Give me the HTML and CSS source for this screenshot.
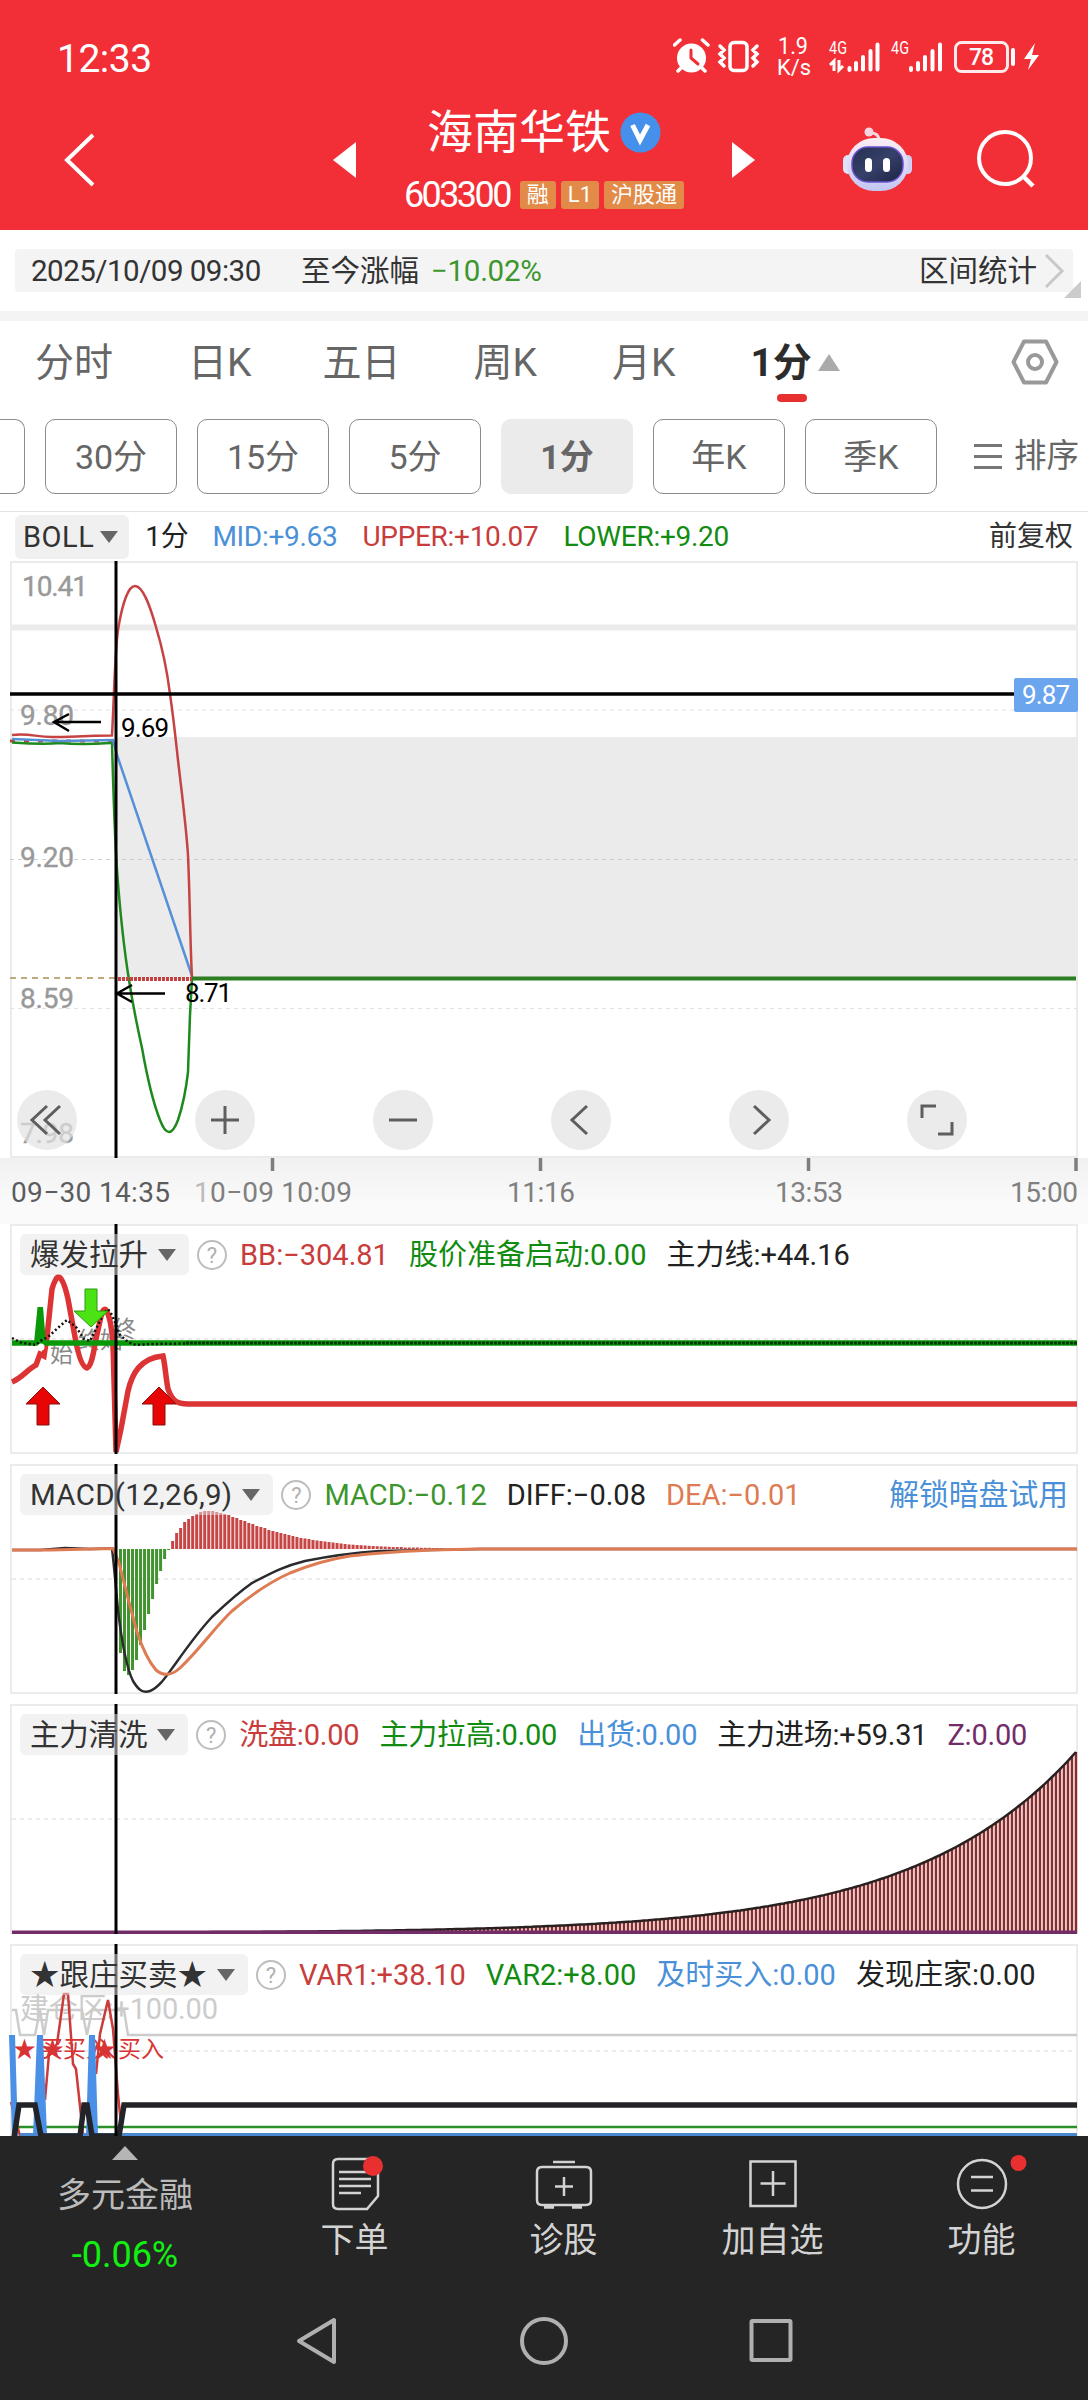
FILE: index.html
```html
<!DOCTYPE html>
<html lang="zh-CN">
<head>
    <meta charset="UTF-8">
    <meta name="viewport" content="width=device-width, initial-scale=1.0">
    <title>海南华铁 603300</title>
    <link rel="stylesheet" href="styles.css">
</head>
<body>

    <header class="header">
        <div class="status-bar">
            <span class="clock">12:33</span>
            <svg class="status-icons" width="368" height="54" viewBox="0 -6 368 54">
                <!-- alarma -->
                <circle cx="18.5" cy="22" r="14.5" fill="#fff"/>
                <path d="M1.500 9 L7 4 M29.500 4 L35 9 M5 35 L9 31 M32 35 L28 31" stroke="#fff" stroke-width="3.500" stroke-linecap="round"/>
                <path d="M18 14 V22 L25 28" stroke="#ee2f36" stroke-width="3" fill="none" stroke-linecap="round"/>
                <!-- vibración -->
                <rect x="57" y="6.500" width="17" height="28" rx="4" fill="none" stroke="#fff" stroke-width="3.500"/>
                <path d="M47 10 L51 14 L47 18 L51 22 L47 26 L51 30 M84 10 L80 14 L84 18 L80 22 L84 26 L80 30" fill="none" stroke="#fff" stroke-width="3.500" stroke-linecap="round"/>
                <text x="105" y="18" font-size="23" textLength="30" lengthAdjust="spacingAndGlyphs">1.9</text>
                <text x="104" y="39" font-size="22" textLength="34" lengthAdjust="spacingAndGlyphs">K/s</text>
                <!-- señal -->
                <text x="156" y="18" font-size="18" textLength="18" lengthAdjust="spacingAndGlyphs">4G</text>
                <path d="M157 29 L161 25 V35 M166 24 V34 L170 30" fill="none" stroke="#fff" stroke-width="3"/>
                <path d="M176.500 32 V34 M183 27 V33.500 M190 21 V33.500 M197.500 15 V33.500 M204.500 8.500 V33.500" stroke="#fff" stroke-width="4" stroke-linecap="round"/>
                <text x="218" y="18" font-size="18" textLength="18" lengthAdjust="spacingAndGlyphs">4G</text>
                <path d="M238 32 V34 M245 27 V33.500 M252 21 V33.500 M259.500 15 V33.500 M267 8.500 V33.500" stroke="#fff" stroke-width="4" stroke-linecap="round"/>
                <!-- batería -->
                <rect x="282.500" y="6.500" width="52" height="29" rx="6" fill="none" stroke="#fff" stroke-width="3" opacity=".9"/>
                <text x="296" y="29" font-size="23" font-weight="500" textLength="25">78</text>
                <path d="M340 14 V28" stroke="#fff" stroke-width="4" stroke-linecap="round"/>
                <path d="M362 7 L351 23 H358 L355 34 L366 19 H359 Z" fill="#fff"/>
            </svg>
        </div>
        <div class="title-bar">
            <svg class="back" width="32" height="56" viewBox="0 0 32 56"><path d="M29 3 L3 28 L29 53" fill="none" stroke="#fff" stroke-width="4"/></svg>
            <svg class="prev" width="23" height="36" viewBox="0 0 23 36"><path d="M23 0 V36 L0 18 Z" fill="#fff"/></svg>
            <div class="stock">
                <div class="stock-name">
                    <h1>海南华铁</h1>
                    <svg width="41" height="41" viewBox="0 0 41 41"><circle cx="20.500" cy="20.500" r="20" fill="#4590ea"/><path d="M12.500 13 L20 28 L28 13" fill="none" stroke="#fff" stroke-width="5"/></svg>
                </div>
                <div class="stock-code">
                    <span class="code">603300</span>
                    <span class="tag">融</span>
                    <span class="tag">L1</span>
                    <span class="tag">沪股通</span>
                </div>
            </div>
            <svg class="next" width="23" height="36" viewBox="0 0 23 36"><path d="M0 0 V36 L23 18 Z" fill="#fff"/></svg>
            <svg class="robot" width="70" height="66" viewBox="0 0 70 66">
                <defs>
                    <linearGradient id="head" x1="0" y1="0" x2="0" y2="1"><stop offset="0" stop-color="#fbeef4"/><stop offset="1" stop-color="#c3c6f3"/></linearGradient>
                    <linearGradient id="face" x1="0" y1="0" x2="1" y2="1"><stop offset="0" stop-color="#26304f"/><stop offset=".5" stop-color="#36406a"/><stop offset="1" stop-color="#1c2340"/></linearGradient>
                </defs>
                <path d="M26 6 Q36 5 36 14" fill="none" stroke="#f7d5e0" stroke-width="3"/>
                <circle cx="26" cy="5" r="4.500" fill="#f7d5e0"/>
                <rect x="0" y="28" width="10" height="19" rx="5" fill="#dfe2fa"/>
                <rect x="60" y="28" width="9" height="19" rx="4.500" fill="#d0d0f5"/>
                <rect x="4" y="11" width="61" height="53" rx="27" fill="url(#head)"/>
                <rect x="9" y="20" width="51" height="35" rx="16" fill="url(#face)" stroke="#6a50d0" stroke-width="1.500"/>
                <rect x="22" y="31" width="7" height="14" rx="3.500" fill="#fff"/>
                <rect x="40" y="31" width="7" height="14" rx="3.500" fill="#fff"/>
            </svg>
            <svg class="search" width="60" height="60" viewBox="0 0 60 60"><circle cx="28" cy="28" r="26" fill="none" stroke="#fff" stroke-width="4"/><path d="M46 46 L56 56" stroke="#fff" stroke-width="4.500"/></svg>
        </div>
    </header>

    <section class="range-row">
        <div class="range-box">
            <span class="range-date">2025/10/09 09:30</span>
            <span class="range-label">至今涨幅</span>
            <span class="range-value">−10.02%</span>
            <span class="range-link">区间统计</span>
            <svg width="22" height="36" viewBox="0 0 22 36"><path d="M2 2 L18 18 L2 34" fill="none" stroke="#c8c8c8" stroke-width="3"/></svg>
        </div>
        <i class="corner"></i>
    </section>

    <nav class="tabs">
        <span class="tab">分时</span>
        <span class="tab">日K</span>
        <span class="tab">五日</span>
        <span class="tab">周K</span>
        <span class="tab">月K</span>
        <span class="tab active">1分</span>
        <svg class="gear" width="48" height="46" viewBox="0 0 48 46"><path d="M13 2.500 H35 L45.500 23 L35 43.500 H13 L2.500 23 Z" fill="none" stroke="#999" stroke-width="4" stroke-linejoin="round"/><circle cx="24" cy="23" r="7" fill="none" stroke="#999" stroke-width="4"/></svg>
    </nav>

    <div class="periods">
        <span class="period cut"></span>
        <span class="period">30分</span>
        <span class="period">15分</span>
        <span class="period">5分</span>
        <span class="period on">1分</span>
        <span class="period">年K</span>
        <span class="period">季K</span>
        <span class="sort"><i></i>排序</span>
    </div>

    <div class="boll-row">
        <span class="chip">BOLL<b class="arrow"></b></span>
        <span class="boll-period">1分</span>
        <span class="blue">MID:+9.63</span>
        <span class="red">UPPER:+10.07</span>
        <span class="green">LOWER:+9.20</span>
        <span class="restore">前复权</span>
    </div>

    <section class="main-chart">
        <svg width="1088" height="597" viewBox="0 561 1088 597">
            <rect x="11" y="562" width="1066" height="595" fill="none" stroke="#ebebeb" stroke-width="2"/>
            <rect x="116" y="737" width="962" height="242" fill="#ebebeb"/>
            <path d="M12 627.500 H1078" stroke="#ebebeb" stroke-width="6"/>
            <path d="M10 710 H1077 M10 1008.500 H1077" stroke="#e2e2e2" stroke-dasharray="4 4"/>
            <path d="M10 859.500 H1077" stroke="#cfcfcf" stroke-dasharray="4 4"/>
            <path d="M10 978 H116" stroke="#bfa97d" stroke-width="2" stroke-dasharray="6 5"/>
            <g class="scale">
                <text x="22" y="596" textLength="66">10.41</text>
                <text x="20" y="725" textLength="54">9.80</text>
                <text x="20" y="867" textLength="54">9.20</text>
                <text x="20" y="1008" textLength="54">8.59</text>
                <text x="20" y="1143" textLength="54">7.98</text>
            </g>
            <path d="M10 741 H113" stroke="#c83c3c" stroke-width="3" stroke-dasharray="5 9"/>
            <path d="M12 742.500 C35 744 50 744 60 743 C80 745 95 744 112 743 C113 780 115 840 117 870 C121 925 125 955 129 980 C134 1012 138 1030 142 1048 C148 1082 154 1105 160 1120 C166 1136 172 1136 178 1120 C183 1105 186 1090 188 1072 L190 1015 L192 979" fill="none" stroke="#1e8a1e" stroke-width="2.500"/>
            <path d="M12 739 L60 741 L113 740 L117 755 L192 976" fill="none" stroke="#5590d8" stroke-width="2.500"/>
            <path d="M12 735 C30 733 35 737 52 737 C70 737 80 736 112 735.500 C114 700 115 650 118 630 C122 605 128 586 135 586 C143 586 150 606 156 627 C163 650 167 670 170 694 C174 722 176 742 178 760 C182 795 186 825 188 855 C190 900 190 940 192 978" fill="none" stroke="#c64343" stroke-width="2.500"/>
            <path d="M118 979 H192" stroke="#c64343" stroke-width="4" stroke-dasharray="3 1"/>
            <path d="M192 978.500 H1076" stroke="#2d7d23" stroke-width="4"/>
            <path d="M10 694 H1015" stroke="#000" stroke-width="3.500"/>
            <path d="M116 561 V1158" stroke="#000" stroke-width="3"/>
            <path d="M101 722 H54 M69 714 L54 722 L69 731 M165 993.500 H117 M132 985 L117 993.500 L132 1002" fill="none" stroke="#000" stroke-width="2.500"/>
            <g class="note">
                <text x="121" y="737" textLength="48">9.69</text>
                <text x="185" y="1002" textLength="47">8.71</text>
            </g>
            <rect x="1014" y="678" width="64" height="34" rx="2" fill="#6ba5ee"/>
            <text class="price-tag" x="1022" y="704" textLength="48">9.87</text>
        </svg>
        <div class="tools">
            <button><svg viewBox="0 0 60 60"><path d="M30 16 L15 30 L30 44 M43 16 L28 30 L43 44"/></svg></button>
            <button><svg viewBox="0 0 60 60"><path d="M16 30 H44 M30 16 V44"/></svg></button>
            <button><svg viewBox="0 0 60 60"><path d="M16 30 H44"/></svg></button>
            <button><svg viewBox="0 0 60 60"><path d="M36 16 L21 30 L36 44"/></svg></button>
            <button><svg viewBox="0 0 60 60"><path d="M25 16 L40 30 L25 44"/></svg></button>
            <button><svg viewBox="0 0 60 60"><path d="M15 28 V16 H29 M45 32 V44 H31"/></svg></button>
        </div>
    </section>

    <div class="time-axis">
        <svg width="1088" height="66" viewBox="0 0 1088 66">
            <path d="M272.500 0 V13 M540.500 0 V13 M808.500 0 V13 M1076 0 V13" stroke="#7d7d7d" stroke-width="3.500"/>
            <text class="first" x="11" y="44" textLength="159">09−30 14:35</text>
            <text x="194" y="44" textLength="158"><tspan fill="#bbb">1</tspan>0−09 10:09</text>
            <text x="507" y="44" textLength="68">11:16</text>
            <text x="775" y="44" textLength="68">13:53</text>
            <text x="1010" y="44" textLength="68">15:00</text>
        </svg>
    </div>

    <!-- 爆发拉升 -->
    <section class="panel">
        <svg width="1088" height="230" viewBox="0 0 1088 230">
            <rect class="frame" x="11" y="1" width="1066" height="228"/>
            <path class="grid" d="M12 115 H1077"/>
            <g class="mark">
                <text x="50" y="138">始</text>
                <text x="78" y="124">终</text>
                <text x="100" y="124">始</text>
                <text x="113" y="113">终</text>
            </g>
            <path d="M12 158 C22 154 28 145 36 141 L40 130 L44 132 L47 113 L52 65 C54 58 57 52 59 53 C63 55 66 66 68 75 L75 113 C78 130 82 143 87 144 C92 142 94 125 96 115 L100 97 C102 85 105 84 106 86 C110 92 112 107 113 120 L116 228 L121 205 L128 167 C132 150 140 134 163 132 C165 140 166 155 168 165 C172 176 176 180 188 180 H1077" fill="none" stroke="#dc3434" stroke-width="5.500"/>
            <path d="M34 119 L37.500 83 H43 L46 119 Z" fill="#089808"/>
            <path d="M12 119 H1077" stroke="#089808" stroke-width="5.500"/>
            <circle cx="41" cy="123" r="3.500" fill="#fff"/>
            <path d="M12 114 L22 119 L36 121 L40 117 L48 113 L60 102 L67 96 L76 103 L84 115 L90 117 L97 103 L104 89 L108 85 L112 91 L120 111 L128 118 L136 121 L150 120 L188 119.500" fill="none" stroke="#111" stroke-width="2.500" stroke-dasharray="2 2.500"/>
            <path d="M186 119 H1077" stroke="#06380a" stroke-width="3" stroke-dasharray="3 1"/>
            <path class="up" d="M43 163 L60 180 H49 V201 H37 V180 H26 Z M159 163 L176 180 H165 V201 H153 V180 H142 Z"/>
            <path class="down" d="M85 65 H97 V87 H108 L91 103 L74 87 H85 Z"/>
            <path class="cross" d="M116 0 V230"/>
        </svg>
        <div class="legend">
            <span class="chip">爆发拉升<b class="arrow"></b></span>
            <i class="help">?</i>
            <span class="red">BB:−304.81</span>
            <span class="green">股价准备启动:0.00</span>
            <span class="black">主力线:+44.16</span>
        </div>
    </section>

    <!-- MACD -->
    <section class="panel">
        <svg width="1088" height="230" viewBox="0 0 1088 230">
            <rect class="frame" x="11" y="1" width="1066" height="228"/>
            <path class="grid" d="M12 115 H1077"/>
            <g id="macd-bars"></g>
            <path d="M12 86 H40 L65 84 L90 85 L112 84.500 C114 100 115 115 118 146 C122 180 127 205 133 217 C139 227 143 229 150 227 C160 223 167 211 176 199 C188 182 200 166 212 153 C232 134 242 126 252 119 C275 107 285 102 305 97 C325 93 350 89 380 87 C420 86 450 85.500 480 85 H1077" fill="none" stroke="#2b2b2e" stroke-width="2.500"/>
            <path d="M12 86 H50 L113 84.500 L119 99 L130 142 L137 168 C143 186 149 198 156 206 C163 212 171 212 180 204 C200 185 215 163 232 147 C252 130 270 118 290 109 C310 101 330 95 350 92 C380 88.500 410 87 430 86 L480 85 H1077" fill="none" stroke="#de7b52" stroke-width="3"/>
            <path class="cross" d="M116 0 V230"/>
        </svg>
        <div class="legend">
            <span class="chip wide">MACD(12,26,9)<b class="arrow"></b></span>
            <i class="help">?</i>
            <span class="leaf">MACD:−0.12</span>
            <span class="black">DIFF:−0.08</span>
            <span class="orange">DEA:−0.01</span>
            <span class="unlock">解锁暗盘试用</span>
        </div>
    </section>

    <!-- 主力清洗 -->
    <section class="panel">
        <svg width="1088" height="230" viewBox="0 0 1088 230">
            <rect class="frame" x="11" y="1" width="1066" height="228"/>
            <path class="grid" d="M12 115 H1077"/>
            <g id="force-bars"></g>
            <path d="M12 228.500 H1077" stroke="#722d68" stroke-width="4"/>
            <path class="cross" d="M116 0 V230"/>
        </svg>
        <div class="legend tight">
            <span class="chip">主力清洗<b class="arrow"></b></span>
            <i class="help">?</i>
            <span class="red">洗盘:0.00</span>
            <span class="green">主力拉高:0.00</span>
            <span class="blue">出货:0.00</span>
            <span class="black">主力进场:+59.31</span>
            <span class="purple">Z:0.00</span>
        </div>
    </section>

    <!-- 跟庄买卖 -->
    <section class="panel last">
        <svg width="1088" height="192" viewBox="0 0 1088 192">
            <path class="frame" d="M11 192 V1 H1077 V192"/>
            <path class="grid" d="M12 107 H1077"/>
            <text class="zone" x="20" y="75" textLength="198">建仓区:+100.00</text>
            <path d="M12 66 H16 L20 91 H35 L40 66 L44 91 L48 66 H82 L87 91 L92 66 H124 L128 91 H1077" fill="none" stroke="#ccc" stroke-width="2.500"/>
            <path d="M12 183 H1077" stroke="#2a902a" stroke-width="2.500"/>
            <path d="M11 158 L20 192 M45 156 L49 110 L57 100 L64 50 L68 50 L73 120 L76 125 L83 190 M96 130 L100 90 L108 56 L113 85 L118 150 L121 180" fill="none" stroke="#cc3a3a" stroke-width="2.500"/>
            <g class="buy">
                <text x="13" y="113">★</text>
                <text x="41" y="113">★</text>
                <text x="93" y="113">★</text>
                <text x="40" y="113">买</text>
                <text x="63" y="113">买入</text>
                <text x="93" y="113">入</text>
                <text x="118" y="113">买入</text>
            </g>
            <path d="M9 91 H15 L18 192 H12 Z M37 91 H43 L47 192 H33 Z M89 91 H95 L98 192 H86 Z" fill="#4a90e6"/>
            <path d="M20 190.500 H1077" stroke="#4a88d0" stroke-width="3"/>
            <path d="M14 194 L19 161 H35 L41 192 H80 L84 161 H87 L92 192 H119 L124 161 H1077" fill="none" stroke="#222428" stroke-width="5.500"/>
            <path class="cross" d="M116 0 V192"/>
        </svg>
        <div class="legend">
            <span class="chip stars">★跟庄买卖★<b class="arrow"></b></span>
            <i class="help">?</i>
            <span class="red">VAR1:+38.10</span>
            <span class="green">VAR2:+8.00</span>
            <span class="blue">及时买入:0.00</span>
            <span class="black">发现庄家:0.00</span>
        </div>
    </section>

    <footer class="footer">
        <div class="actions">
            <div class="sector">
                <svg width="26" height="14" viewBox="0 0 26 14"><path d="M13 0 L26 14 H0 Z" fill="#b5b5b5"/></svg>
                <span class="sector-name">多元金融</span>
                <span class="sector-change">-0.06%</span>
            </div>
            <div class="action">
                <svg width="60" height="56" viewBox="0 0 60 56"><path d="M13 4 H49 Q53 4 53 8 V41 L42 54 H13 Q8 54 8 49 V9 Q8 4 13 4 Z M14 17 H44 M14 24 H46 M14 31 H46 M14 38 H36"/><circle class="dot" cx="48" cy="11" r="10"/></svg>
                <span>下单</span>
            </div>
            <div class="action">
                <svg width="60" height="56" viewBox="0 0 60 56"><path d="M19 7 H41 M8 12 H52 Q57 12 57 17 V45 Q57 50 52 50 H8 Q3 50 3 45 V17 Q3 12 8 12 Z M30 22 V41 M21 31.500 H39 M10 52.500 H20 M38 52.500 H48"/></svg>
                <span>诊股</span>
            </div>
            <div class="action">
                <svg width="60" height="56" viewBox="0 0 60 56"><path d="M7.500 6.500 H52.500 V51 H7.500 Z M30 16 V41 M17.500 28.500 H42.500"/></svg>
                <span>加自选</span>
            </div>
            <div class="action">
                <svg width="90" height="56" viewBox="-15 0 90 56"><circle cx="30" cy="29" r="24"/><path d="M19 22 H41 M19 35.500 H41"/><circle class="dot" cx="66.500" cy="8" r="8"/></svg>
                <span>功能</span>
            </div>
        </div>
        <div class="sys-nav">
            <svg width="44" height="48" viewBox="0 0 44 48"><path d="M39 3 V45 L4 24 Z"/></svg>
            <svg width="48" height="48" viewBox="0 0 48 48"><circle cx="24" cy="24" r="22"/></svg>
            <svg width="44" height="48" viewBox="0 0 44 48"><rect x="2.500" y="4" width="39" height="39" rx="1"/></svg>
        </div>
    </footer>

    <script>
        const ns = 'http://www.w3.org/2000/svg';

        function addBar(group, x, y, w, h, color) {
            const r = document.createElementNS(ns, 'rect');
            r.setAttribute('x', x);
            r.setAttribute('y', y);
            r.setAttribute('width', w);
            r.setAttribute('height', h);
            r.setAttribute('fill', color);
            group.appendChild(r);
        }

        // MACD: barras verdes hacia abajo y rojas hacia arriba
        const macd = [-104, -122, -126, -121, -111, -96, -81, -65, -50, -35, -22, -10, -1,
            8, 16, 21, 27, 30, 33, 35, 37, 38, 38, 38, 37, 36, 35, 34, 32, 31, 29, 28, 26, 25, 23, 22, 21, 19, 18, 17, 16, 15, 14,
            13, 12, 11, 10.5, 10, 9, 8.5, 8, 7.5, 7, 6.5, 6, 5.5, 5, 4.5, 4.3, 4, 3.8, 3.5, 3.2, 3, 2.8, 2.6, 2.4,
            2.2, 2, 2, 2, 1.5, 1.5, 1.5, 1.5, 1.2, 1.2, 1.2, 1, 1, 1];
        const macdGroup = document.getElementById('macd-bars');
        macd.forEach((v, i) => {
            const x = 119 + i * 4.01;
            addBar(macdGroup, x, v < 0 ? 85 : 85 - v, 3, Math.abs(v), v < 0 ? '#419430' : '#c64545');
        });

        // 主力进场: crecimiento exponencial
        const forceGroup = document.getElementById('force-bars');
        const curve = x => 229 - 181 * Math.exp(-0.0062 * (1076 - x));
        let line = '';
        for (let x = 1076; x > 116; x -= 4) {
            addBar(forceGroup, x - 2, curve(x), 4, 229 - curve(x), '#fbdcdc');
            addBar(forceGroup, x - 1.2, curve(x), 2.3, 229 - curve(x), '#812f2f');
            line += (line ? 'L' : 'M') + x + ' ' + curve(x).toFixed(1);
        }
        const path = document.createElementNS(ns, 'path');
        path.setAttribute('d', line);
        path.setAttribute('class', 'force-line');
        forceGroup.appendChild(path);
    </script>

</body>
</html>
```
FILE: styles.css
```css
/* Estilos generales */
* {
    box-sizing: border-box;
}

body {
    margin: 0;
    width: 1088px;
    height: 2400px;
    overflow: hidden;
    background-color: #fff;
    color: #333;
    font-family: Roboto, "Noto Sans CJK SC", sans-serif;
    font-size: 29px;
    white-space: nowrap;
}

svg {
    display: block;
    flex: none;
}

h1 {
    margin: 0;
}

/* Cabecera */
.header {
    height: 230px;
    background-color: #f22f37;
    color: #fff;
}

.status-bar {
    display: flex;
    justify-content: space-between;
    height: 108px;
    padding: 30px 47px 0 57px;
}

.clock {
    margin-top: 6px;
    font-size: 39px;
    line-height: 46px;
    letter-spacing: -0.5px;
}

.status-icons text {
    fill: #fff;
}

.title-bar {
    display: flex;
    align-items: center;
    height: 104px;
    padding-left: 64px;
}

.prev {
    margin-left: 237px;
}

.stock {
    width: 376px;
}

.stock-name {
    display: flex;
    justify-content: center;
    align-items: center;
    gap: 9px;
    height: 52px;
}

.stock-name h1 {
    font-size: 46px;
    font-weight: 400;
    line-height: 50px;
    height: 54px;
}

.stock-name svg {
    margin-top: -4px;
}

.stock-code {
    display: flex;
    justify-content: center;
    align-items: center;
    gap: 5px;
    height: 34px;
    margin-top: 18px;
}

.code {
    margin-right: 5px;
    font-size: 36px;
    letter-spacing: -2.6px;
}

.tag {
    height: 28px;
    padding: 0 7px;
    border-radius: 3px;
    background-color: #e28b48;
    font-size: 22px;
    line-height: 27px;
}

.robot {
    margin-left: 88px;
}

.search {
    margin-left: 64px;
}

/* Estadística del rango */
.range-row {
    position: relative;
    height: 91px;
    padding: 19px 15px 0;
    border-bottom: 10px solid #f4f4f4;
}

.range-box {
    display: flex;
    align-items: center;
    height: 43px;
    padding: 0 7px 0 16px;
    border-radius: 4px;
    background-color: #f4f4f4;
    font-size: 29.500px;
    line-height: 42px;
}

.range-date {
    width: 270px;
    letter-spacing: -0.5px;
}

.range-value {
    margin-left: 12px;
    letter-spacing: -0.3px;
    color: #3c962c;
}

.range-link {
    margin-left: auto;
    margin-right: 7px;
}

.corner {
    position: absolute;
    right: 7px;
    top: 51px;
    border-left: 17px solid transparent;
    border-bottom: 17px solid #ccc;
}

/* Pestañas */
.tabs {
    display: flex;
    align-items: flex-start;
    height: 98px;
    padding: 13px 29px 0 35px;
    color: #666;
    font-size: 39px;
    line-height: 58px;
}

.tab {
    margin-right: 75px;
}

.tab:nth-child(2) {
    margin-right: 71px;
}

.tab:nth-child(3) {
    margin-right: 73px;
}

.tab.active {
    position: relative;
    margin-right: 0;
    color: #2c2c2c;
    font-weight: 700;
}

.tab.active::before {
    content: "";
    position: absolute;
    left: 27px;
    top: 60px;
    width: 30px;
    height: 8px;
    border-radius: 4px;
    background-color: #e93030;
}

.tab.active::after {
    content: "";
    position: absolute;
    left: 68px;
    top: 20px;
    border: 11px solid transparent;
    border-top: 0;
    border-bottom: 17px solid #aaa;
}

.gear {
    margin: 5px 0 0 auto;
}

/* Periodos */
.periods {
    display: flex;
    gap: 20px;
    height: 93px;
    overflow: hidden;
    border-bottom: 1px solid #e4e4e4;
    color: #666;
}

.period {
    flex: none;
    width: 132px;
    height: 75px;
    border: 1px solid #8c8c8c;
    border-radius: 10px;
    font-size: 34px;
    line-height: 74px;
    text-align: center;
}

.period.cut {
    width: 25px;
    border-left: 0;
    border-radius: 0 10px 10px 0;
}

.period.on {
    border-color: #ebebeb;
    background-color: #ebebeb;
    font-weight: 700;
}

.sort {
    display: flex;
    align-items: center;
    gap: 12px;
    height: 75px;
    margin-left: 17px;
    font-size: 32.500px;
    line-height: 75px;
}

.sort i {
    width: 28px;
    height: 25px;
    border-top: 3px solid #777;
    border-bottom: 3px solid #777;
    background: linear-gradient(#777, #777) center / 100% 3px no-repeat;
}

/* Indicador principal */
.boll-row {
    display: flex;
    align-items: center;
    height: 49px;
    padding: 3px 15px 2px;
    font-size: 28px;
    line-height: 44px;
    letter-spacing: -0.3px;
}

.boll-period {
    margin: 0 24px 0 16px;
    color: #222;
}

.boll-row .blue,
.boll-row .red {
    margin-right: 25px;
}

.boll-row .chip {
    height: 44px;
    padding: 0 11px 0 8px;
    background-color: #f0f0f0;
    font-size: 29px;
    letter-spacing: 0.5px;
}

.boll-row .arrow {
    margin-left: 6px;
}

.restore {
    margin-left: auto;
    letter-spacing: 0;
}

.chip {
    display: flex;
    align-items: center;
    height: 41px;
    padding: 0 13px 0 10px;
    border-radius: 6px;
    background-color: rgba(230, 230, 230, 0.5);
    color: #333;
    font-size: 29.500px;
}

.chip.wide {
    letter-spacing: 0.3px;
}

.arrow {
    margin-left: 10px;
    border: 9px solid transparent;
    border-top: 12px solid #666;
    border-bottom: 0;
}

/* Gráfico principal */
.main-chart {
    position: relative;
    height: 597px;
}

.scale text {
    fill: #999;
    font-size: 28px;
    stroke: #999;
    stroke-width: 0.4px;
}

.note text {
    fill: #000;
    font-size: 26px;
}

.price-tag {
    fill: #fff;
    font-size: 26px;
}

.tools {
    position: absolute;
    left: 17px;
    bottom: 8px;
    display: flex;
    gap: 118px;
}

.tools button {
    width: 60px;
    height: 60px;
    padding: 0;
    border: none;
    border-radius: 50%;
    background-color: rgba(226, 226, 226, 0.7);
}

.tools path {
    fill: none;
    stroke: #5e5e5e;
    stroke-width: 3;
}

/* Eje de tiempo */
.time-axis {
    height: 66px;
    background: linear-gradient(#f1f1f1, #fafafa 70%);
}

.time-axis text {
    fill: #808080;
    font-size: 28px;
}

.time-axis .first {
    fill: #5c5c5c;
}

/* Paneles de indicadores */
.panel {
    position: relative;
    height: 230px;
    margin-bottom: 10px;
}

.panel.last {
    height: 192px;
    margin-bottom: 0;
}

.frame {
    fill: none;
    stroke: #ebebeb;
    stroke-width: 2;
}

.grid {
    stroke: #ebebeb;
    stroke-width: 2;
    stroke-dasharray: 4 4;
}

.cross {
    stroke: #000;
    stroke-width: 3;
}

.mark text {
    fill: #888;
    font-size: 23px;
}

.up {
    fill: #e80505;
    stroke: #8c0f0f;
    stroke-width: 1;
}

.down {
    fill: #4be314;
    stroke: #2b9a0c;
    stroke-width: 1;
}

.zone {
    fill: #ccc;
    font-size: 29px;
}

.buy text {
    fill: #d83434;
    font-size: 23px;
}

.force-line {
    fill: none;
    stroke: #2b2020;
    stroke-width: 2.500;
}

.legend {
    position: absolute;
    left: 20px;
    right: 21px;
    top: 10px;
    display: flex;
    align-items: center;
    height: 41px;
    line-height: 40px;
}

.legend > span + span {
    margin-left: 20px;
}

.legend.tight {
    letter-spacing: -0.2px;
}

.help {
    width: 30px;
    height: 30px;
    margin: 0 13px 0 8px;
    border: 2px solid #bdbdbd;
    border-radius: 50%;
    color: #b0b0b0;
    font-size: 22px;
    font-style: normal;
    line-height: 27px;
    text-align: center;
}

.legend .unlock {
    margin-left: auto;
    margin-right: -1px;
    color: #4a90d9;
    font-size: 29.800px;
}

.red { color: #c83c3c; }
.green { color: #118c11; }
.leaf { color: #3c962c; }
.blue { color: #4a90d9; }
.black { color: #222; }
.orange { color: #de7b52; }
.purple { color: #722d68; }

/* Barra inferior */
.footer {
    height: 264px;
    background-color: #252525;
}

.actions {
    display: flex;
    height: 158px;
    color: #d3d3d3;
    font-size: 34px;
}

.sector {
    display: flex;
    flex-direction: column;
    align-items: center;
    width: 250px;
    padding-top: 10px;
    color: #bbb;
}

.sector-name {
    margin-top: 10px;
    line-height: 50px;
}

.sector-change {
    margin-top: 11px;
    color: #12f012;
    font-size: 36px;
    line-height: 48px;
}

.action {
    display: flex;
    flex-direction: column;
    align-items: center;
    width: 209px;
    padding-top: 19px;
    line-height: 50px;
}

.action span {
    margin-top: 4px;
}

.action path,
.action circle {
    fill: none;
    stroke: #d3d3d3;
    stroke-width: 2.500;
}

.action .dot {
    fill: #e93030;
    stroke: none;
}

.sys-nav {
    display: flex;
    justify-content: center;
    gap: 181px;
    padding: 23px 0 0;
}

.sys-nav svg {
    fill: none;
    stroke: #b0b0b0;
    stroke-width: 4;
    stroke-linejoin: round;
}
```
